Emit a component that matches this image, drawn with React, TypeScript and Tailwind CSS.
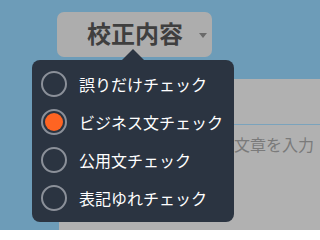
import React, { useState } from "react";

const options = ["誤りだけチェック", "ビジネス文チェック", "公用文チェック", "表記ゆれチェック"];

const font = { fontFamily: '"Noto Sans CJK JP", "Noto Sans", sans-serif' };

const App = () => {
  const [selected, setSelected] = useState(1);

  return (
    <div className="relative h-[230px] w-full overflow-hidden bg-[#6d9cb8]" style={font}>
      <div className="pl-[57px] pt-[12px]">
        <button className="flex h-[45px] w-[155px] items-center rounded-[7px] bg-[#adadad] pl-[30px]">
          <span className="mb-[4px] text-[24px] font-bold leading-none text-[#3f3f3f]">校正内容</span>
          <span className="ml-[16px] mt-[1px] h-0 w-0 border-x-[4px] border-t-[5px] border-x-transparent border-t-[#6a6a6a]" />
        </button>
      </div>

      <div className="ml-[59px] mt-[22px] h-[160px] bg-[#b1b1b1]">
        <div className="h-[46px] border-b border-[#7ba3bc]" />
        <p className="pl-[175px] pt-[11px] text-[16px] leading-none whitespace-nowrap text-[#7a7a7a]">
          文章を入力
        </p>
      </div>

      <div className="absolute left-[32px] top-[60px] w-[202px] rounded-[8px] bg-[#2b3441] py-[5px] pl-[9px]">
        <span className="absolute -top-[11px] left-[90px] h-0 w-0 border-x-[11px] border-b-[11px] border-x-transparent border-b-[#2b3441]" />
        {options.map((label, i) => (
          <div
            key={label}
            onClick={() => setSelected(i)}
            className="flex h-[38px] cursor-pointer items-center gap-[12px]"
          >
            <span className="flex h-[26px] w-[26px] items-center justify-center rounded-full border-2 border-[#8b9099]">
              {selected === i && <span className="h-[18px] w-[18px] rounded-full bg-[#ff6422]" />}
            </span>
            <span className="text-[16px] leading-none text-white">{label}</span>
          </div>
        ))}
      </div>
    </div>
  );
};

export default App;
